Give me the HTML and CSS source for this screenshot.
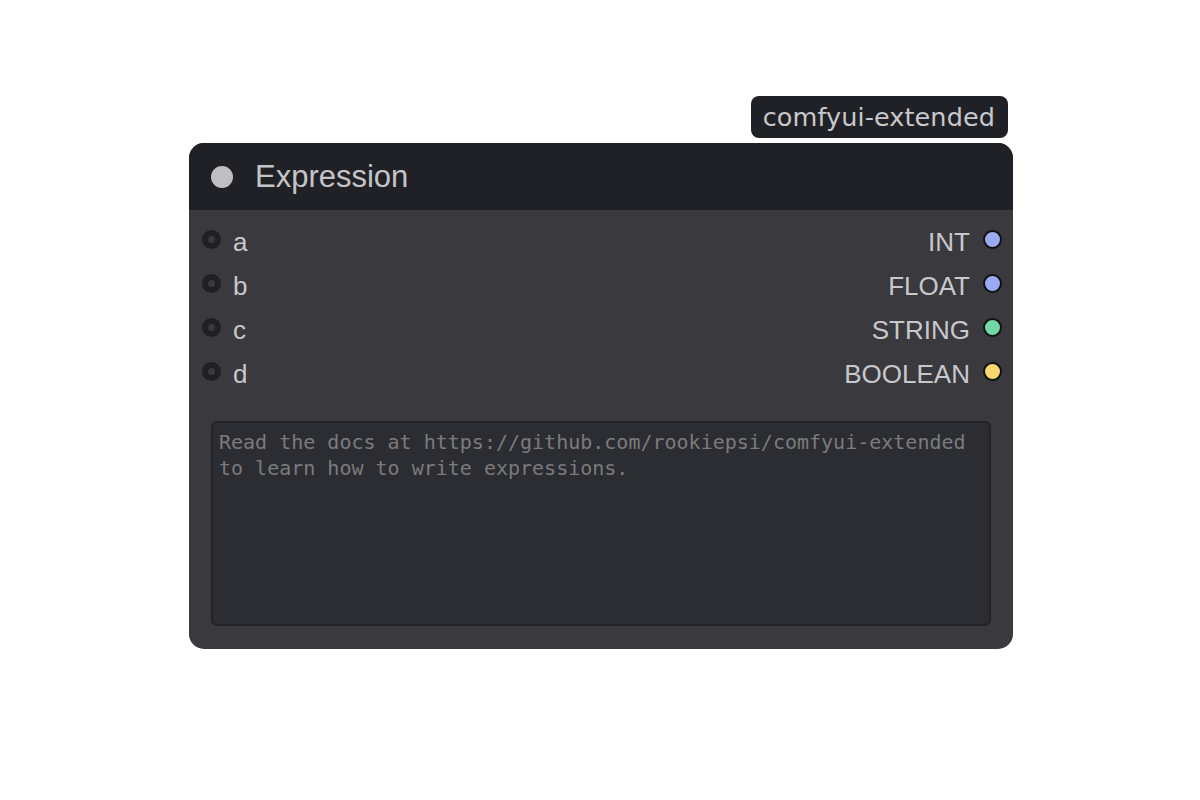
FILE: index.html
```html
<!DOCTYPE html>
<html>
<head>
<meta charset="utf-8">
<link rel="stylesheet" href="styles.css">
</head>
<body>
<div class="canvas">
  <div class="node-wrap">
    <div class="badge-row"><span class="badge">comfyui-extended</span></div>
    <div class="node">
      <div class="header">
        <span class="header-dot"></span>
        <span class="title">Expression</span>
      </div>
      <div class="body">
        <div class="slots">
          <div class="inputs">
            <div class="slot in"><span class="in-dot"></span><span>a</span></div>
            <div class="slot in"><span class="in-dot"></span><span>b</span></div>
            <div class="slot in"><span class="in-dot"></span><span>c</span></div>
            <div class="slot in"><span class="in-dot"></span><span>d</span></div>
          </div>
          <div class="outputs">
            <div class="slot out"><span>INT</span><span class="out-dot int"></span></div>
            <div class="slot out"><span>FLOAT</span><span class="out-dot float"></span></div>
            <div class="slot out"><span>STRING</span><span class="out-dot string"></span></div>
            <div class="slot out"><span>BOOLEAN</span><span class="out-dot bool"></span></div>
          </div>
        </div>
        <textarea class="expr" placeholder="Read the docs at https://github.com/rookiepsi/comfyui-extended to learn how to write expressions."></textarea>
      </div>
    </div>
  </div>
</div>
</body>
</html>
```
FILE: styles.css
```css
html, body {
  margin: 0;
  padding: 0;
  background: #ffffff;
}
.canvas {
  width: 1200px;
  height: 800px;
  padding-top: 96px;
  padding-left: 189px;
  box-sizing: border-box;
}
.node-wrap {
  width: 824px;
  display: flex;
  flex-direction: column;
}
.badge-row {
  display: flex;
  justify-content: flex-end;
  padding-right: 5px;
  margin-bottom: 5px;
}
.badge {
  background: #202126;
  color: #c8c8cc;
  font-family: "DejaVu Sans", sans-serif;
  font-size: 25.5px;
  letter-spacing: 0.1px;
  height: 42px;
  line-height: 42px;
  padding: 0 13px 0 12px;
  border-radius: 8px;
  box-sizing: border-box;
}
.node {
  background: #39393e;
  border-radius: 15px;
  overflow: hidden;
  height: 506px;
  display: flex;
  flex-direction: column;
}
.header {
  background: #202126;
  height: 67px;
  display: flex;
  align-items: center;
  padding-left: 22px;
  gap: 22px;
  box-sizing: border-box;
}
.header-dot {
  width: 22px;
  height: 22px;
  border-radius: 50%;
  background: #bfbfc3;
}
.title {
  font-family: "Liberation Sans", Arial, sans-serif;
  font-size: 31px;
  color: #c4c4c8;
}
.body {
  padding: 9px 22px 23px 22px;
  display: flex;
  flex-direction: column;
  flex: 1;
}
.slots {
  display: flex;
  justify-content: space-between;
}
.inputs, .outputs {
  display: flex;
  flex-direction: column;
}
.slot {
  height: 44px;
  display: flex;
  align-items: center;
  font-family: "Liberation Sans", Arial, sans-serif;
  font-size: 26px;
  color: #c8c8cc;
}
.slot.in {
  gap: 12px;
  margin-left: -9px;
}
.slot.out {
  gap: 13px;
  justify-content: flex-end;
  margin-right: -11px;
}
.slot span:not([class]) {
  line-height: 1;
  margin-top: 2px;
}
.in-dot {
  width: 19px;
  height: 19px;
  border-radius: 50%;
  background: #1f2024;
  position: relative;
  margin-top: -3px;
}
.in-dot::after {
  content: "";
  position: absolute;
  left: 6px;
  top: 6px;
  width: 7px;
  height: 7px;
  border-radius: 50%;
  background: #38393e;
}
.out-dot {
  width: 19px;
  height: 19px;
  border-radius: 50%;
  border: 2px solid #111114;
  box-sizing: border-box;
  margin-top: -3px;
}
.int, .float { background: #9aabf4; }
.string { background: #72d8a5; }
.bool { background: #fad870; }
.expr {
  margin-top: 26px;
  flex: 1;
  width: 100%;
  box-sizing: border-box;
  background: #2c2d32;
  border: 2px solid #222327;
  border-radius: 6px;
  resize: none;
  outline: none;
  padding: 6px 6px;
  font-family: "DejaVu Sans Mono", "Liberation Mono", monospace;
  font-size: 20px;
  line-height: 26px;
  color: #cccccc;
}
.expr::placeholder {
  color: #7b7b7d;
  opacity: 1;
}
```
